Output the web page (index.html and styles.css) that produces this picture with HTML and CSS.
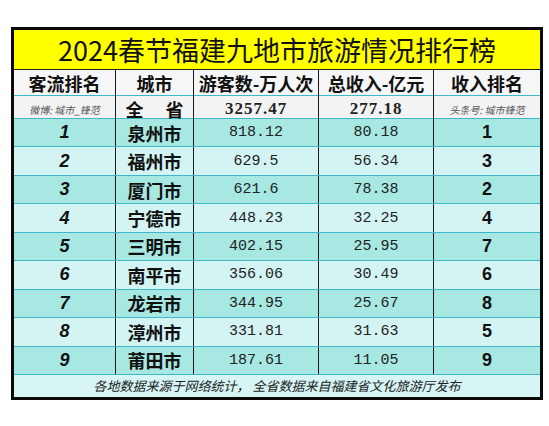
FILE: index.html
```html
<!DOCTYPE html>
<html lang="zh-CN">
<head>
    <meta charset="UTF-8">
    <title>2024春节福建九地市旅游情况排行榜</title>
    <link rel="stylesheet" href="styles.css">
</head>
<body>
    <div class="board">
        <div class="title">2024春节福建九地市旅游情况排行榜</div>
        <div class="row head">
            <div>客流排名</div>
            <div>城市</div>
            <div>游客数-万人次</div>
            <div>总收入-亿元</div>
            <div>收入排名</div>
        </div>
        <div class="row total">
            <div class="note">微博: 城市_锋范</div>
            <div class="city wide">全 省</div>
            <div class="num bold">3257.47</div>
            <div class="num bold">277.18</div>
            <div class="note">头条号: 城市锋范</div>
        </div>
        <div class="row dark">
            <div class="rank">1</div><div class="city">泉州市</div>
            <div class="num">818.12</div><div class="num">80.18</div><div class="inc">1</div>
        </div>
        <div class="row light">
            <div class="rank">2</div><div class="city">福州市</div>
            <div class="num">629.5</div><div class="num">56.34</div><div class="inc">3</div>
        </div>
        <div class="row dark">
            <div class="rank">3</div><div class="city">厦门市</div>
            <div class="num">621.6</div><div class="num">78.38</div><div class="inc">2</div>
        </div>
        <div class="row light">
            <div class="rank">4</div><div class="city">宁德市</div>
            <div class="num">448.23</div><div class="num">32.25</div><div class="inc">4</div>
        </div>
        <div class="row dark">
            <div class="rank">5</div><div class="city">三明市</div>
            <div class="num">402.15</div><div class="num">25.95</div><div class="inc">7</div>
        </div>
        <div class="row light">
            <div class="rank">6</div><div class="city">南平市</div>
            <div class="num">356.06</div><div class="num">30.49</div><div class="inc">6</div>
        </div>
        <div class="row dark">
            <div class="rank">7</div><div class="city">龙岩市</div>
            <div class="num">344.95</div><div class="num">25.67</div><div class="inc">8</div>
        </div>
        <div class="row light">
            <div class="rank">8</div><div class="city">漳州市</div>
            <div class="num">331.81</div><div class="num">31.63</div><div class="inc">5</div>
        </div>
        <div class="row dark">
            <div class="rank">9</div><div class="city">莆田市</div>
            <div class="num">187.61</div><div class="num">11.05</div><div class="inc">9</div>
        </div>
        <div class="foot">各地数据来源于网络统计， 全省数据来自福建省文化旅游厅发布</div>
    </div>
</body>
</html>
```

FILE: styles.css
```css
body {
    margin: 0;
    background: #ffffff;
    font-family: "Liberation Sans", "Noto Sans CJK SC", sans-serif;
    color: #111;
}
.board {
    width: 526px;
    margin: 27px 0 0 11px;
    border: 3px solid #0a0a0a;
}
.title {
    height: 39px;
    line-height: 39px;
    background: #ffff00;
    text-align: center;
    font-family: "Noto Sans CJK SC", sans-serif;
    font-size: 27px;
    border-bottom: 1px solid #222;
}
.row {
    display: grid;
    grid-template-columns: 102px 78px 125px 115px 106px;
    border-bottom: 1px solid #3cb8c8;
    height: 27.45px;
}
.row > div {
    display: flex;
    align-items: center;
    justify-content: center;
    border-right: 1px solid #1a1a1a;
    white-space: nowrap;
}
.row > div:last-child { border-right: none; }

.head {
    height: 25px;
    background: #f6f6f6;
    font-family: "Noto Sans CJK SC", sans-serif;
    font-weight: bold;
    font-size: 18px;
}
.total {
    height: 22px;
    background: #f3f3f3;
}
.dark { background: #a8e8e3; }
.light { background: #d4f4f4; }

.note {
    font-family: "Noto Sans CJK SC", sans-serif;
    font-style: italic;
    font-size: 10px;
    color: #555;
}
.city {
    font-family: "Noto Sans CJK SC", sans-serif;
    font-weight: bold;
    font-size: 18px;
}
.city.wide { letter-spacing: 9px; padding-left: 9px; }
.rank {
    font-weight: bold;
    font-style: italic;
    font-size: 18px;
}
.inc {
    font-weight: bold;
    font-size: 18px;
}
.num {
    font-family: "Liberation Mono", monospace;
    font-size: 15px;
    color: #222;
}
.num.bold {
    font-family: "Liberation Serif", serif;
    font-weight: bold;
    font-size: 17px;
    letter-spacing: 1px;
}
.foot {
    height: 22px;
    line-height: 22px;
    background: #d7f5f5;
    text-align: center;
    font-family: "Noto Sans CJK SC", sans-serif;
    font-style: italic;
    font-size: 13px;
    color: #222;
}
```
